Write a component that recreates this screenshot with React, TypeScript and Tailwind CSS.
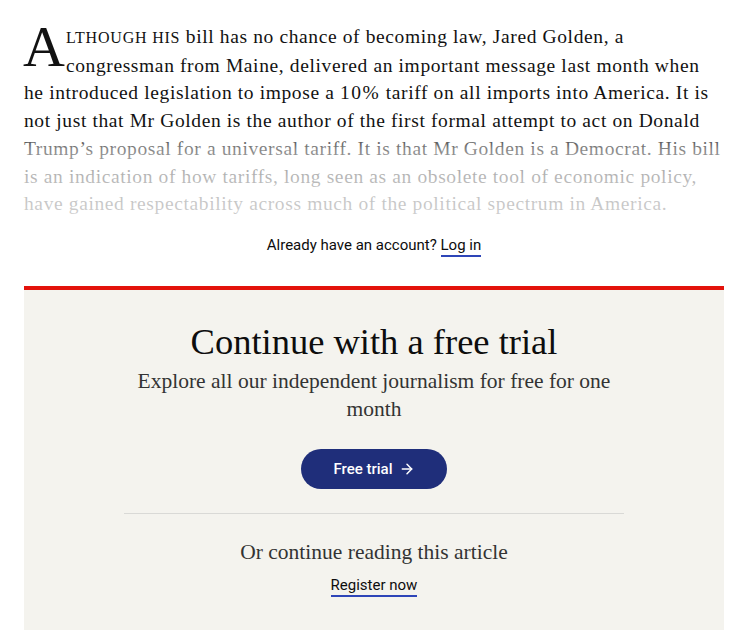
import React from 'react';
import { ArrowRight } from 'lucide-react';

const serif = "font-['Liberation_Serif',Georgia,serif]";
const sans = "font-['Roboto','Liberation_Sans',Arial,sans-serif]";

const TextLink = ({ children }: { children: React.ReactNode }) => (
  <a href="#" className="text-[#0d0d0d] border-b-2 border-[#2e45b8] pb-[1px]">
    {children}
  </a>
);

const Paywall = () => (
  <div className="bg-[#f4f3ee] border-t-4 border-[#e3120b] flex flex-col items-center pt-[32px] pb-[34px]">
    <h2 className={`${serif} text-[36.5px] leading-[40px] text-[#0d0d0d]`}>Continue with a free trial</h2>
    <p className={`${serif} mt-[5px] max-w-[490px] text-center text-[21.5px] leading-[28px] text-[#333]`}>
      Explore all our independent journalism for free for one month
    </p>
    <button className={`${sans} mt-[26px] h-10 w-[146px] rounded-full bg-[#1f2e7a] text-white text-[15px] font-medium flex items-center justify-center gap-1.5`}>
      Free trial
      <ArrowRight className="w-4 h-4" strokeWidth={2.25} />
    </button>
    <div className="mt-6 w-[500px] border-t border-[#d9d9d6]" />
    <p className={`${serif} mt-[24px] text-[21.5px] leading-[28px] text-[#333]`}>Or continue reading this article</p>
    <div className={`${sans} mt-[8px] text-[15px]`}>
      <TextLink>Register now</TextLink>
    </div>
  </div>
);

const App = () => {
  return (
    <div className="min-h-screen bg-white pl-6 pr-5">
      <div className="relative pt-[23px]">
        <p className={`${serif} text-[19.5px] leading-[27.7px] tracking-[0.62px] text-[#121212]`}>
          <span className="float-left text-[58px] leading-[40px] tracking-normal mt-[4px] mr-[1px] -ml-[1px]">A</span>
          <span className="uppercase text-[16px] tracking-[0.05em]">lthough his</span> bill has no chance of becoming law, Jared Golden, a
          <br />
          congressman from Maine, delivered an important message last month when
          <br />
          he introduced legislation to impose a <span className="tracking-[1.5px]">10%</span> tariff on all imports into America. It is
          <br />
          not just that Mr Golden is the author of the first formal attempt to act on Donald
          <br />
          Trump’s proposal for a universal tariff. It is that Mr Golden is a Democrat. His bill
          <br />
          is an indication of how tariffs, long seen as an obsolete tool of economic policy,
          <br />
          have gained respectability across much of the political spectrum in America.
        </p>
        <div className="absolute inset-x-0 bottom-0 h-[88px] bg-[linear-gradient(to_bottom,rgba(255,255,255,0)_0%,rgba(255,255,255,0.5)_22%,rgba(255,255,255,0.7)_55%,rgba(255,255,255,0.8)_100%)]" />
      </div>
      <p className={`${sans} mt-[17px] text-center text-[15px] leading-[20px] text-[#0d0d0d]`}>
        Already have an account? <TextLink>Log in</TextLink>
      </p>
      <div className="mt-[31px]">
        <Paywall />
      </div>
    </div>
  );
};

export default App;
